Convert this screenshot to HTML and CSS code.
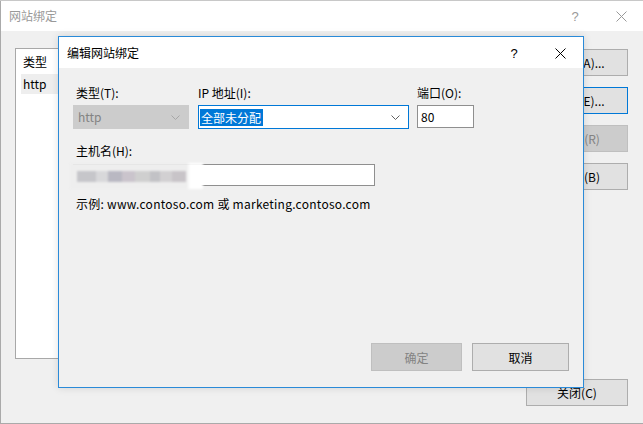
FILE: index.html
```html
<!DOCTYPE html>
<html lang="zh-CN">
<head>
<meta charset="utf-8">
<link rel="stylesheet" href="styles.css">
</head>
<body>
<div class="desk">
  <div class="win outer">
    <div class="titlebar outer-title">
      <span class="title">网站绑定</span>
      <span class="caption">
        <span class="cap-btn help">?</span>
        <span class="cap-btn"><svg class="x" width="11" height="11" viewBox="0 0 11 11"><path d="M0.5 0.5 L10.5 10.5 M10.5 0.5 L0.5 10.5"/></svg></span>
      </span>
    </div>
    <div class="outer-body">
      <div class="outer-main">
        <div class="list">
          <div class="list-head">类型</div>
          <div class="list-row">http</div>
        </div>
        <div class="side-btns">
          <button class="btn">添加(A)...</button>
          <button class="btn focus">编辑(E)...</button>
          <button class="btn disabled">删除(R)</button>
          <button class="btn">浏览(B)</button>
        </div>
      </div>
      <div class="outer-foot">
        <button class="btn close-btn">关闭(C)</button>
      </div>
    </div>
  </div>

  <div class="win dialog">
    <div class="titlebar dlg-title">
      <span class="title">编辑网站绑定</span>
      <span class="caption">
        <span class="cap-btn help">?</span>
        <span class="cap-btn"><svg class="x" width="11" height="11" viewBox="0 0 11 11"><path d="M0.5 0.5 L10.5 10.5 M10.5 0.5 L0.5 10.5"/></svg></span>
      </span>
    </div>
    <div class="dlg-body">
      <div class="row">
        <div class="field f-type">
          <label class="lbl indent">类型(T):</label>
          <div class="select disabled-select">
            <span class="sel-text">http</span>
            <svg class="chev" width="9" height="5" viewBox="0 0 9 5"><path d="M0.5 0.5 L4.5 4.5 L8.5 0.5"/></svg>
          </div>
        </div>
        <div class="field f-ip">
          <label class="lbl">IP 地址(I):</label>
          <div class="select focus-select">
            <span class="sel-text hl">全部未分配</span>
            <svg class="chev" width="9" height="5" viewBox="0 0 9 5"><path d="M0.5 0.5 L4.5 4.5 L8.5 0.5"/></svg>
          </div>
        </div>
        <div class="field f-port">
          <label class="lbl">端口(O):</label>
          <div class="textbox port">80</div>
        </div>
      </div>
      <label class="lbl indent host-lbl">主机名(H):</label>
      <div class="textbox host">
        <div class="blur">
          <span class="b b1"></span><span class="b b2"></span><span class="b b3"></span><span class="b b4"></span><span class="b b5"></span><span class="b b6"></span><span class="b b7"></span><span class="b b8"></span>
        </div>
      </div>
      <div class="example indent">示例: www.contoso.com 或 marketing.contoso.com</div>
      <div class="actions">
        <button class="btn disabled ok">确定</button>
        <button class="btn cancel">取消</button>
      </div>
    </div>
  </div>
</div>
</body>
</html>
```
FILE: styles.css
```css
* { box-sizing: border-box; }
html, body { margin: 0; padding: 0; }
body {
  background: #f0f0f0;
  font-family: "Noto Sans CJK SC", "Microsoft YaHei", "Noto Sans", sans-serif;
  font-size: 12px;
  color: #000;
}
.desk {
  position: relative;
  width: 643px;
  height: 424px;
  overflow: hidden;
  background: #f0f0f0;
  border-top: 1px solid #c8c8c8;
}
.win {
  position: absolute;
  display: flex;
  flex-direction: column;
  background: #f0f0f0;
}
.titlebar {
  display: flex;
  align-items: center;
  background: #fff;
  padding-left: 8px;
  flex: none;
}
.title { line-height: 16px; }
.caption { margin-left: auto; display: flex; height: 100%; }
.cap-btn {
  width: 46px;
  display: flex;
  align-items: center;
  justify-content: center;
}
.help { font-family: "Liberation Sans", sans-serif; font-size: 13px; }
.x path { stroke: #000; stroke-width: 1; fill: none; }

/* outer window */
.outer {
  left: 0;
  top: 0;
  width: 645px;
  height: 423px;
  border: 1px solid #aaaaaa;
  border-top: none;
}
.outer-title { height: 30px; color: #999; }
.outer-title .x path { stroke: #999; }
.outer-body {
  flex: 1;
  display: flex;
  flex-direction: column;
  padding: 17px 16px 0 14px;
}
.outer-main { display: flex; gap: 10px; }
.list {
  flex: 1;
  height: 311px;
  background: #fff;
  border: 1px solid #a8a8a8;
  padding-left: 5px;
}
.list-head {
  height: 25px;
  padding: 5px 0 0 2px;
  line-height: 16px;
}
.list-row {
  height: 20px;
  line-height: 20px;
  padding-left: 2px;
  background: #eeeeee;
  width: 200px;
}
.side-btns {
  width: 102px;
  display: flex;
  flex-direction: column;
  gap: 11px;
  padding-top: 1px;
}
.btn {
  font: inherit;
  color: #000;
  background: #e1e1e1;
  border: 1px solid #adadad;
  height: 27px;
  padding: 0;
  margin: 0;
}
.side-btns .btn { padding-left: 6px; }
.btn.focus { border: 1px solid #0078d7; }
.btn.disabled { background: #cccccc; border-color: #bfbfbf; color: #838383; }
.outer-foot { display: flex; justify-content: flex-end; margin-top: 20px; }
.close-btn { width: 102px; }

/* dialog */
.dialog {
  left: 58px;
  top: 35px;
  width: 526px;
  height: 352px;
  border: 1px solid #2a8ad8;
  box-shadow: 0 0 8px rgba(0,0,0,0.12);
}
.dlg-title { height: 31px; padding-top: 1px; }
.dlg-body {
  flex: 1;
  display: flex;
  flex-direction: column;
  padding: 17px 14px 16px 14px;
}
.row { display: flex; }
.field { display: flex; flex-direction: column; }
.f-type { width: 116px; margin-right: 9px; }
.f-ip { width: 211px; margin-right: 8px; }
.f-port { width: 57px; }
.lbl { display: block; line-height: 16px; height: 16px; margin-bottom: 4px; }
.indent { padding-left: 3px; }
.select {
  height: 24px;
  display: flex;
  align-items: center;
  padding: 0 8px 0 4px;
}
.sel-text { line-height: 16px; }
.chev { margin-left: auto; }
.chev path { fill: none; stroke: #606060; stroke-width: 1; }
.disabled-select { background: #cccccc; border: 1px solid #cccccc; color: #838383; }
.disabled-select .chev path { stroke: #a6a6a6; }
.focus-select { background: #fff; border: 1px solid #0078d7; padding-left: 1px; }
.hl { background: #0078d7; color: #fff; padding: 0 2px 0 1px; line-height: 17px; }
.textbox {
  background: #fff;
  border: 1px solid #8f8f8f;
  height: 23px;
  line-height: 21px;
  padding-left: 3px;
}
.host-lbl { margin-top: 14px; margin-bottom: 5px; }
.host { width: 302px; height: 22px; position: relative; }
.blur {
  position: absolute;
  left: -4px;
  top: -2px;
  width: 133px;
  height: 26px;
  background: linear-gradient(to right, #eeeeee 0, #eeeeee 88%, #fff 90%, #fff 100%);
  display: flex;
  align-items: center;
  padding-left: 7px;
  filter: blur(0.8px);
}
.b { display: block; height: 11px; }
.b1 { width: 19px; background: #c6c6ca; }
.b2 { width: 12px; background: #d8d8da; }
.b3 { width: 14px; background: #b9b8c2; }
.b4 { width: 13px; background: #cac4cc; }
.b5 { width: 15px; background: #cfcfcf; }
.b6 { width: 10px; background: #c2c2c6; }
.b7 { width: 12px; background: #d2d0d2; }
.b8 { width: 14px; background: #c8c4c8; }
.example { margin-top: 10px; line-height: 16px; letter-spacing: 0.25px; }
.actions {
  margin-top: auto;
  display: flex;
  justify-content: flex-end;
  gap: 10px;
}
.actions .btn { height: 28px; }
.ok { width: 91px; }
.cancel { width: 97px; }
```
